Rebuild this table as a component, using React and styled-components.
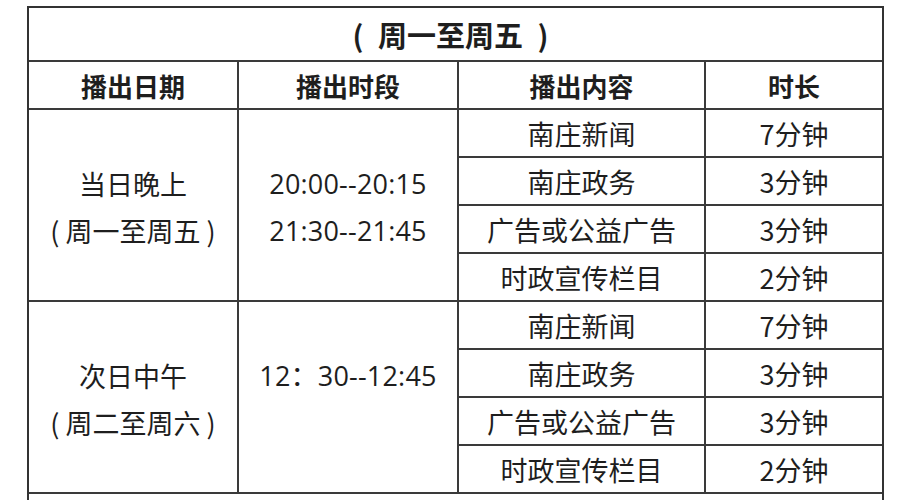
import React from "react";
import styled, { createGlobalStyle } from "styled-components";

const Global = createGlobalStyle`
  html, body { margin: 0; padding: 0; background: #ffffff; overflow: hidden; }
  body { width: 908px; height: 500px; }
`;

const Page = styled.div`
  width: 908px;
  height: 500px;
  padding: 6px 0 0 27px;
  box-sizing: border-box;
  background: #fff;
  overflow: hidden;
`;

const Grid = styled.div`
  display: grid;
  grid-template-columns: 208px 218px 245px 176px;
  grid-auto-rows: 46px;
  grid-template-rows: 52px 46px;
  gap: 2px;
  width: max-content;
  background: #3a3a3a;
  border: 2px solid #333;
  font-family: "Noto Sans CJK SC", "Noto Sans", sans-serif;
  color: #1e1e1e;
`;

const Cell = styled.div`
  background: #fff;
  display: flex;
  align-items: center;
  justify-content: center;
  font-size: ${(p) => (p.$bold ? "26px" : "27px")};
  font-weight: ${(p) => (p.$bold ? 700 : 400)};
  grid-column: ${(p) => p.$col || "auto"};
  grid-row: ${(p) => p.$row || "auto"};
  white-space: pre;
`;

const TitleCell = styled(Cell)`
  font-size: 29px;
  font-weight: 700;
  padding-right: 10px;
`;

const Stack = styled.div`
  display: flex;
  flex-direction: column;
  align-items: center;
  line-height: 47px;
  padding-top: 4px;
`;

const Time = styled.span`
  font-family: "Open Sans", "Noto Sans CJK SC", sans-serif;
  font-size: 27px;
  letter-spacing: 0.2px;
  height: 47px;
`;

const Note = styled(Cell)`
  grid-column: 1 / span 4;
  height: 60px;
`;

const blocks = [
  {
    date: ["当日晚上", "( 周一至周五 )"],
    times: ["20:00--20:15", "21:30--21:45"],
  },
  {
    date: ["次日中午", "( 周二至周六 )"],
    times: ["12：30--12:45", ""],
  },
];

const items = [
  ["南庄新闻", "7分钟"],
  ["南庄政务", "3分钟"],
  ["广告或公益广告", "3分钟"],
  ["时政宣传栏目", "2分钟"],
];

export default function App() {
  return (
    <Page>
      <Global />
      <Grid>
        <TitleCell $col="1 / span 4">{"(\u2002周一至周五\u2002)"}</TitleCell>
        <Cell $bold>播出日期</Cell>
        <Cell $bold>播出时段</Cell>
        <Cell $bold>播出内容</Cell>
        <Cell $bold>时长</Cell>
        {blocks.map((b, bi) => {
          const start = 3 + bi * 4;
          return (
            <React.Fragment key={bi}>
              <Cell $col="1" $row={`${start} / span 4`}>
                <Stack>
                  {b.date.map((d) => (
                    <span key={d}>{d}</span>
                  ))}
                </Stack>
              </Cell>
              <Cell $col="2" $row={`${start} / span 4`}>
                <Stack>
                  {b.times.map((t, i) => (
                    <Time key={i}>{t}</Time>
                  ))}
                </Stack>
              </Cell>
              {items.map(([c, d], i) => (
                <React.Fragment key={c}>
                  <Cell $col="3" $row={`${start + i}`}>{c}</Cell>
                  <Cell $col="4" $row={`${start + i}`}>{d}</Cell>
                </React.Fragment>
              ))}
            </React.Fragment>
          );
        })}
        <Note $row="11" />
      </Grid>
    </Page>
  );
}
